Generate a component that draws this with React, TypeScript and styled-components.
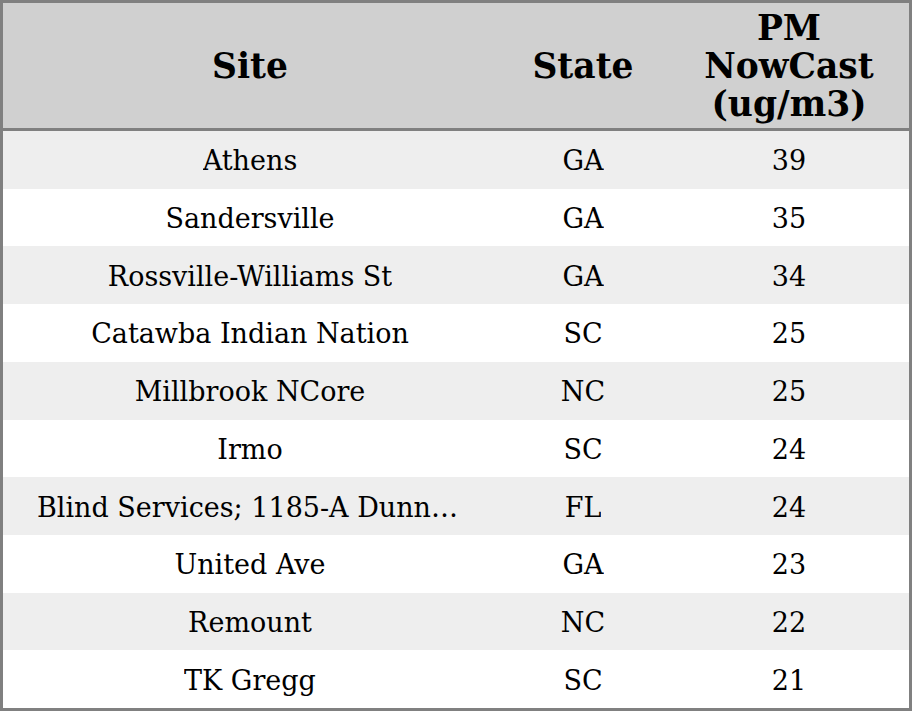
import React from 'react';
import styled, { createGlobalStyle } from 'styled-components';

const GlobalStyle = createGlobalStyle`
	html, body {
		margin: 0;
		padding: 0;
		background: #ffffff;
	}
	body {
		font-family: 'DejaVu Serif', 'Liberation Serif', serif;
	}
`;

const Table = styled.div`
	box-sizing: border-box;
	width: 912px;
	height: 711px;
	border: 3px solid #808080;
	display: grid;
	grid-template-columns: 494px 172px 1fr;
	grid-template-rows: 128px repeat(10, 1fr);
	color: #000000;
`;

const HeadCell = styled.div`
	background: #d0d0d0;
	border-bottom: 3px solid #808080;
	display: flex;
	align-items: center;
	justify-content: center;
	text-align: center;
	font-weight: bold;
	font-size: 34.5px;
	line-height: 38px;
	padding-top: 1px;
`;

const Cell = styled.div<{ $odd: boolean }>`
	background: ${(p) => (p.$odd ? '#eeeeee' : '#ffffff')};
	display: flex;
	align-items: center;
	justify-content: center;
	font-size: 27px;
	min-width: 0;
	padding: 2px 34px 0;
`;

const CellText = styled.span`
	display: block;
	max-width: 100%;
	white-space: nowrap;
	overflow: hidden;
	text-overflow: ellipsis;
	text-align: center;
`;

const rows = [
	{ site: 'Athens', state: 'GA', pm: 39 },
	{ site: 'Sandersville', state: 'GA', pm: 35 },
	{ site: 'Rossville-Williams St', state: 'GA', pm: 34 },
	{ site: 'Catawba Indian Nation', state: 'SC', pm: 25 },
	{ site: 'Millbrook NCore', state: 'NC', pm: 25 },
	{ site: 'Irmo', state: 'SC', pm: 24 },
	{ site: 'Blind Services; 1185-A Dunn Ave', state: 'FL', pm: 24 },
	{ site: 'United Ave', state: 'GA', pm: 23 },
	{ site: 'Remount', state: 'NC', pm: 22 },
	{ site: 'TK Gregg', state: 'SC', pm: 21 },
];

const App = () => {
	return (
		<React.Fragment>
			<GlobalStyle />
			<Table>
				<HeadCell>Site</HeadCell>
				<HeadCell>State</HeadCell>
				<HeadCell>
					PM
					<br />
					NowCast
					<br />
					(ug/m3)
				</HeadCell>
				{rows.map((row, i) => (
					<React.Fragment key={row.site}>
						<Cell $odd={i % 2 === 0}>
							<CellText>{row.site}</CellText>
						</Cell>
						<Cell $odd={i % 2 === 0}>
							<CellText>{row.state}</CellText>
						</Cell>
						<Cell $odd={i % 2 === 0}>
							<CellText>{row.pm}</CellText>
						</Cell>
					</React.Fragment>
				))}
			</Table>
		</React.Fragment>
	);
};

export default App;
